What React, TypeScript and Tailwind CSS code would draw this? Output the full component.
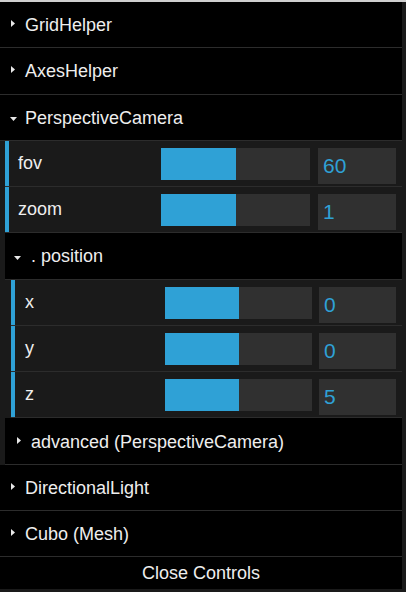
const FONT = { fontFamily: '"Liberation Sans", Arial, sans-serif' };

function Arrow({ open }: { open?: boolean }) {
  if (open) {
    return (
      <svg width="7" height="4" viewBox="0 0 7 4" className="shrink-0 mt-[2px]">
        <polygon points="0,0 7,0 3.5,4" fill="#e8e8e8" />
      </svg>
    );
  }
  return (
    <svg width="4" height="7" viewBox="0 0 4 7" className="shrink-0 mb-[4px]">
      <polygon points="0,0 4,3.5 0,7" fill="#e8e8e8" />
    </svg>
  );
}

function Title({
  label,
  open,
  indent,
  gap = 'ml-[10px]',
}: {
  label: string;
  open?: boolean;
  indent: string;
  gap?: string;
}) {
  return (
    <div className={`h-[46.27px] bg-black border-b border-[#2c2c2c] flex items-center text-[18px] text-[#eee] pt-[2px] ${indent}`}>
      <Arrow open={open} />
      <span className={gap}>{label}</span>
    </div>
  );
}

function NumberRow({ label, value, nested }: { label: string; value: string; nested?: boolean }) {
  return (
    <div className="h-[46.27px] border-b border-[#2c2c2c] bg-[#1a1a1a]">
      <div className="h-full flex border-l-4 border-[#2fa1d6]">
        <div
          className={`flex items-center text-[18px] text-[#eee] ${
            nested ? 'w-[150px] pl-[10px]' : 'w-[152px] pl-[9px]'
          }`}
        >
          {label}
        </div>
        <div className="flex items-start pt-[7px]">
          <div className={`h-[32px] bg-[#303030] ${nested ? 'w-[147px]' : 'w-[149px]'}`}>
            <div className="h-full w-1/2 bg-[#2fa1d6]" />
          </div>
          <div
            className={`h-[36px] bg-[#303030] text-[#2fa1d6] text-[21px] flex items-center pl-[5px] ${
              nested ? 'w-[77px] ml-[7px]' : 'w-[78px] ml-[8px]'
            }`}
          >
            {value}
          </div>
        </div>
      </div>
    </div>
  );
}

export default function App() {
  return (
    <div className="w-[406px] h-[592px] bg-[#1a1a1a] overflow-hidden" style={FONT}>
      <div className="h-[2px] bg-[#cfcfcf]" />
      <div className="w-[402px]">
        <Title label="GridHelper" indent="pl-[11px]" />
        <Title label="AxesHelper" indent="pl-[11px]" />
        <Title label="PerspectiveCamera" open indent="pl-[10px]" gap="ml-[8px]" />
        <div className="pl-[5px] bg-[#1a1a1a]">
          <NumberRow label="fov" value="60" />
          <NumberRow label="zoom" value="1" />
          <Title label=". position" open indent="pl-[9px]" gap="ml-[10px]" />
          <div className="pl-[6px] bg-[#1a1a1a]">
            <NumberRow label="x" value="0" nested />
            <NumberRow label="y" value="0" nested />
            <NumberRow label="z" value="5" nested />
          </div>
          <Title label="advanced (PerspectiveCamera)" indent="pl-[12px]" />
        </div>
        <Title label="DirectionalLight" indent="pl-[11px]" />
        <Title label="Cubo (Mesh)" indent="pl-[11px]" />
        <div className="h-[32px] bg-black flex items-center justify-center text-[18px] text-[#eee]">
          Close Controls
        </div>
      </div>
    </div>
  );
}
